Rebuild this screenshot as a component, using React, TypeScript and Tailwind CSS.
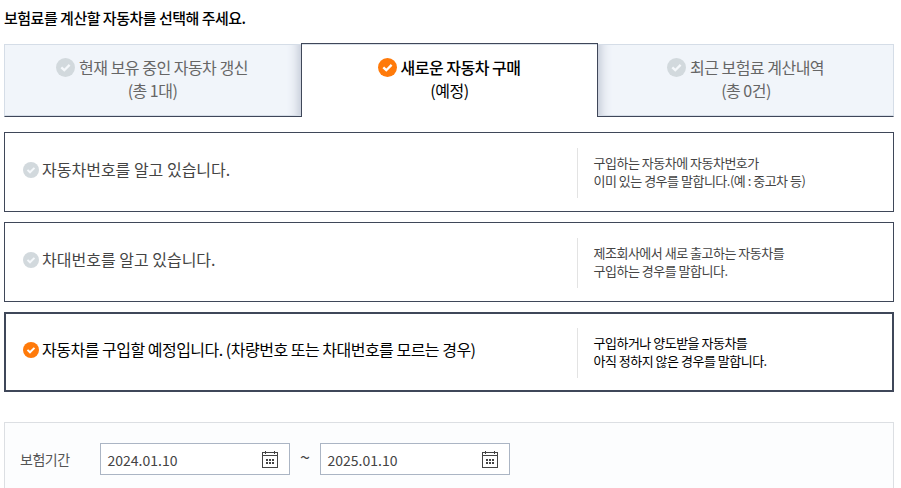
function Check({ size, on }: { size: number; on?: boolean }) {
  return (
    <svg width={size} height={size} viewBox="0 0 19 19" className="shrink-0">
      <circle cx="9.5" cy="9.5" r="9.5" fill={on ? "#ff7a0a" : "#d2d9dd"} />
      <path d="M5.3 9.3 8.3 12.2 13.6 6.9" fill="none" stroke={on ? "#fff" : "#f5f8fb"} strokeWidth="2.3" />
    </svg>
  );
}

function Calendar() {
  return (
    <svg width="16" height="17" viewBox="0 0 16 17" fill="#444" shapeRendering="crispEdges">
      <path d="M0 1h16v16H0zM1 2v2h14V2zM1 5v11h14V5z" fillRule="evenodd" />
      <path d="M3 0h1v3H3zM12 0h1v3h-1z" />
      <path d="M4 8h2v2H4zM7 8h2v2H7zM10 8h2v2h-2zM4 11h2v2H4zM7 11h2v2H7zM10 11h2v2h-2z" />
    </svg>
  );
}

function Tab({ title, sub, on, shade = "" }: { title: string; sub: string; on?: boolean; shade?: string }) {
  return (
    <button
      className={
        on
          ? "flex h-[74px] w-[297px] shrink-0 flex-col items-center border border-b-0 border-[#3f4759] bg-white pt-3 pr-px text-black shadow-[inset_0_1px_#d9e0e8]"
          : `mt-px flex h-[73px] flex-col items-center border border-b border-[#d5dde7] border-b-[#3f4759] bg-[#f1f5fa] pt-[11px] text-[#666] ${shade}`
      }
    >
      <span className="flex h-[23px] items-center gap-1">
        <Check size={19} on={on} />
        <span className={on ? "font-medium" : ""}>{title}</span>
      </span>
      <span className="h-[23px] pl-px">{sub}</span>
    </button>
  );
}

function Option({ title, lines, on, spacing = "" }: { title: string; lines: [string, string]; on?: boolean; spacing?: string }) {
  return (
    <div
      className={`flex h-20 items-center border-[#3f4759] bg-white ${
        on ? "border-2 pl-[17px] text-black" : "border pl-[18px] text-[#444]"
      }`}
    >
      <div className={`flex flex-1 items-center gap-[3px] pb-1 text-base leading-6 ${spacing}`}>
        <Check size={16} on={on} />
        <span className="-mt-0.5">{title}</span>
      </div>
      <div
        className={`mt-0.5 flex h-[50px] flex-col justify-center border-l border-[#e3e3e3] pb-0.5 pl-[15.5px] text-[13px] leading-[18px] tracking-[-0.5px] ${
          on ? "w-[315px]" : "w-[316px]"
        }`}
      >
        <p>{lines[0]}</p>
        <p>{lines[1]}</p>
      </div>
    </div>
  );
}

function DateField({ value }: { value: string }) {
  return (
    <div className="flex h-8 w-[190px] items-center justify-between border border-[#abb5c4] bg-white pr-[11px] pl-[6.5px] text-sm text-[#444]">
      <span className="pt-0.5">{value}</span>
      <Calendar />
    </div>
  );
}

export default function App() {
  return (
    <main className="flex h-[488px] w-[901px] flex-col overflow-hidden bg-white pr-[7px] pl-1 font-['Noto_Sans_CJK_KR','Noto_Sans',sans-serif]">
      <h1 className="h-[43px] shrink-0 pt-[7px] text-[15px] leading-[22px] font-medium tracking-[-0.5px] text-black">
        보험료를 계산할 자동차를 선택해 주세요.
      </h1>
      <div className="flex shrink-0 text-base leading-[23px] tracking-[-0.5px]">
        <Tab title="현재 보유 중인 자동차 갱신" sub="(총 1대)" shade="w-[297px] border-r-0 pr-0.5 shadow-[inset_0_-1px_#d5dde7,inset_-14px_0_12px_-12px_#b9bfce]" />
        <Tab title="새로운 자동차 구매" sub="(예정)" on />
        <Tab title="최근 보험료 계산내역" sub="(총 0건)" shade="w-[296px] border-l-0 shadow-[inset_0_-1px_#d5dde7,inset_14px_0_12px_-12px_#b9bfce]" />
      </div>
      <div className="mt-[15px] flex shrink-0 flex-col gap-2.5">
        <Option title="자동차번호를 알고 있습니다." lines={["구입하는 자동차에 자동차번호가", "이미 있는 경우를 말합니다.(예 : 중고차 등)"]} />
        <Option title="차대번호를 알고 있습니다." lines={["제조회사에서 새로 출고하는 자동차를", "구입하는 경우를 말합니다."]} />
        <Option
          title="자동차를 구입할 예정입니다. (차량번호 또는 차대번호를 모르는 경우)"
          lines={["구입하거나 양도받을 자동차를", "아직 정하지 않은 경우를 말합니다."]}
          spacing="tracking-[-0.5px]"
          on
        />
      </div>
      <section className="mt-[30px] flex h-[90px] shrink-0 items-start border border-[#dcdfe3] bg-[#fcfdfe] pt-5 pl-[15px]">
        <span className="w-20 text-sm leading-8 tracking-[-0.5px] text-[#555]">보험기간</span>
        <DateField value="2024.01.10" />
        <span className="w-[30px] text-center text-lg leading-[26px] text-[#444]">~</span>
        <DateField value="2025.01.10" />
      </section>
    </main>
  );
}
